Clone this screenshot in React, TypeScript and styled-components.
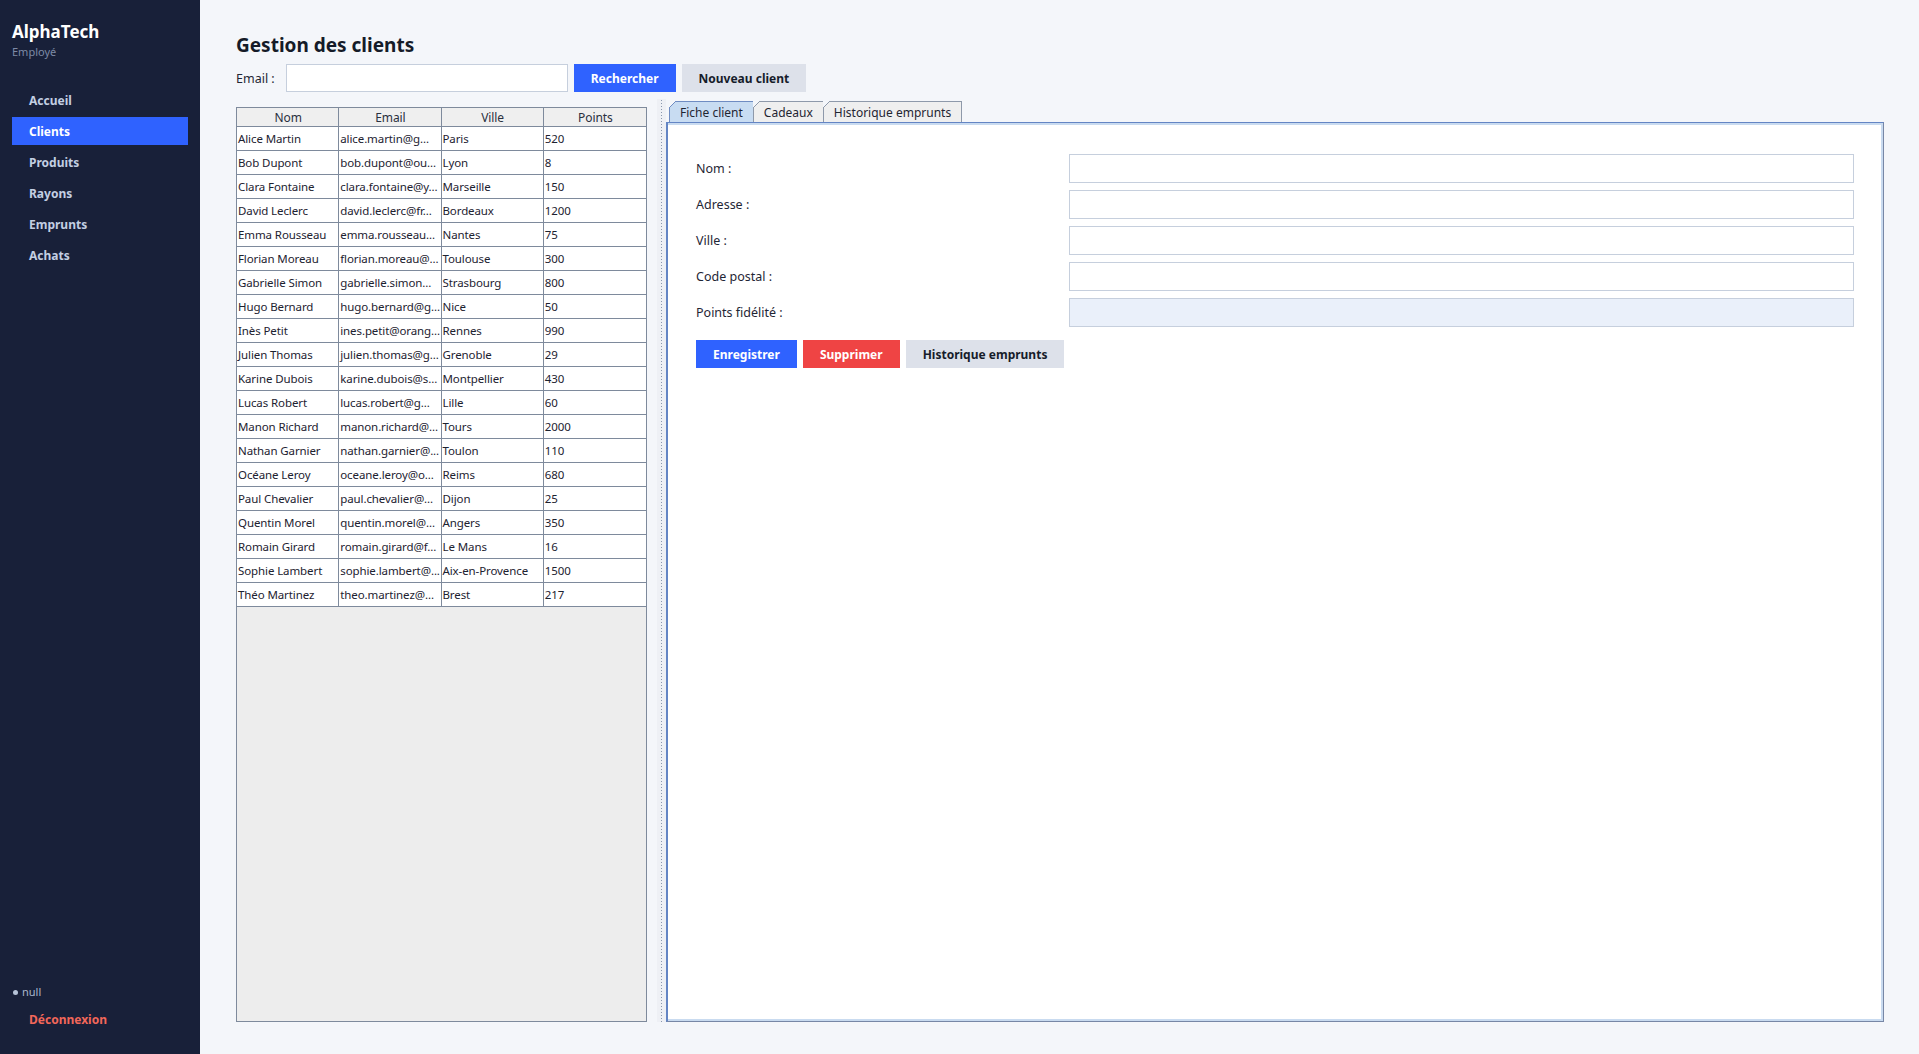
import * as React from 'react';
import styled, { createGlobalStyle } from 'styled-components';

const GlobalStyle = createGlobalStyle`
  html, body {
    margin: 0;
    padding: 0;
    height: 100%;
    overflow: hidden;
  }
  body {
    font-family: "Noto Sans", "Open Sans", "Liberation Sans", sans-serif;
    color: #1b2333;
    background: #f4f6fa;
  }
  * {
    box-sizing: border-box;
  }
`;

const Layout = styled.div`
  display: flex;
  width: 100vw;
  height: 100vh;
`;

/* ---------- sidebar ---------- */

const Sidebar = styled.aside`
  width: 200px;
  flex-shrink: 0;
  background: #182039;
  display: flex;
  flex-direction: column;
  padding: 22px 12px 21px 12px;
`;

const Brand = styled.div`
  font-size: 17px;
  line-height: 20px;
  font-weight: 700;
  color: #ffffff;
`;

const Role = styled.div`
  margin-top: 3px;
  font-size: 11px;
  line-height: 13px;
  color: #7d8aa6;
`;

const Nav = styled.nav`
  margin-top: 28px;
  display: flex;
  flex-direction: column;
  gap: 3px;
`;

const NavItem = styled.div<{ $active?: boolean; $danger?: boolean }>`
  height: 28px;
  display: flex;
  align-items: center;
  padding-left: 17px;
  font-size: 12px;
  font-weight: 700;
  background: ${p => (p.$active ? '#2f62ff' : 'transparent')};
  color: ${p => (p.$danger ? '#f2675a' : p.$active ? '#ffffff' : '#c3cfe3')};
  cursor: pointer;
`;

const Footer = styled.div`
  margin-top: auto;
  display: flex;
  flex-direction: column;
  gap: 6px;
`;

const UserLine = styled.div`
  display: flex;
  align-items: center;
  gap: 4px;
  padding-left: 1px;
  font-size: 11px;
  line-height: 14px;
  color: #aab7cd;
`;

const Dot = styled.span`
  width: 5px;
  height: 5px;
  border-radius: 50%;
  background: #b6c3d8;
`;

/* ---------- main ---------- */

const Main = styled.main`
  flex: 1;
  min-width: 0;
  display: flex;
  flex-direction: column;
  padding: 33px 35px 32px 36px;
`;

const Title = styled.h1`
  margin: 0;
  font-size: 19px;
  line-height: 24px;
  font-weight: 700;
  color: #151b28;
`;

const SearchRow = styled.div`
  margin-top: 7px;
  display: flex;
  align-items: center;
  height: 28px;
  gap: 6px;
`;

const FieldLabel = styled.label`
  font-size: 12.5px;
  color: #1f2635;
  white-space: nowrap;
`;

const TextInput = styled.input<{ $readOnly?: boolean }>`
  height: 29px;
  border: 1px solid #c6cfdd;
  background: ${p => (p.$readOnly ? '#eaf0fa' : '#ffffff')};
  font: inherit;
  font-size: 12.5px;
  padding: 0 6px;
  outline: none;
`;

const SearchInput = styled(TextInput)`
  width: 282px;
  height: 28px;
  margin-left: 5px;
`;

const Button = styled.button<{ $variant: 'primary' | 'danger' | 'neutral' }>`
  height: 28px;
  border: none;
  padding: 0 17px;
  font-family: inherit;
  font-size: 12px;
  font-weight: 700;
  cursor: pointer;
  background: ${p =>
    p.$variant === 'primary' ? '#2f62ff' : p.$variant === 'danger' ? '#ef4444' : '#dde1ea'};
  color: ${p => (p.$variant === 'neutral' ? '#161c2a' : '#ffffff')};
`;

const Split = styled.div`
  margin-top: 7px;
  flex: 1;
  min-height: 0;
  display: flex;
`;

const LeftPane = styled.div`
  width: 411px;
  flex-shrink: 0;
  padding-top: 8px;
  display: flex;
  flex-direction: column;
`;

const Divider = styled.div`
  width: 9px;
  margin-left: 10px;
  flex-shrink: 0;
  background-color: #eef0f5;
  background-image: linear-gradient(#8a97ad 1px, transparent 1px);
  background-size: 1px 3px;
  background-position: 4px 1px;
  background-repeat: repeat-y;
`;

/* ---------- table ---------- */

const TableBox = styled.div`
  flex: 1;
  border: 1px solid #7e8a9c;
  background: #ededed;
  display: flex;
  flex-direction: column;
  font-size: 11.5px;
  letter-spacing: -0.1px;
`;

const Row = styled.div<{ $head?: boolean }>`
  display: grid;
  grid-template-columns: repeat(4, 1fr);
  height: ${p => (p.$head ? '19px' : '24px')};
  background: ${p => (p.$head ? '#efefef' : '#ffffff')};
  border-bottom: 1px solid #7e8a9c;
`;

const Cell = styled.div<{ $head?: boolean }>`
  display: flex;
  align-items: center;
  justify-content: ${p => (p.$head ? 'center' : 'flex-start')};
  padding: 0 0 0 1px;
  border-right: 1px solid #7e8a9c;
  white-space: nowrap;
  overflow: hidden;
  font-size: ${p => (p.$head ? '12px' : 'inherit')};
  color: ${p => (p.$head ? '#2a3040' : '#1d2230')};
  &:last-child {
    border-right: none;
  }
`;

/* ---------- tabs + form ---------- */

const RightPane = styled.div`
  flex: 1;
  min-width: 0;
  display: flex;
  flex-direction: column;
`;

const TabBar = styled.div`
  height: 23px;
  display: flex;
  align-items: flex-end;
  padding-left: 3px;
`;

const Tab = styled.div<{ $active?: boolean }>`
  position: relative;
  height: 21px;
  padding: 0 10px;
  display: flex;
  align-items: center;
  font-size: 12px;
  color: #1f2532;
  background: ${p => (p.$active ? '#c8dcf2' : '#efefef')};
  border: 1px solid ${p => (p.$active ? '#6f8cc2' : '#8e99aa')};
  border-bottom: none;
  margin-left: ${p => (p.$active ? '0' : '-1px')};
  &::before {
    content: '';
    position: absolute;
    top: -1px;
    left: -1px;
    width: 7px;
    height: 7px;
    background: linear-gradient(
      135deg,
      #f4f6fa 0 calc(50% - 0.6px),
      ${p => (p.$active ? '#6f8cc2' : '#8e99aa')} calc(50% - 0.6px) calc(50% + 0.6px),
      transparent calc(50% + 0.6px)
    );
  }
`;

const Panel = styled.div`
  flex: 1;
  background: #ffffff;
  border: 1px solid #7787a6;
  border-left: 2px solid #6485c4;
  border-top-color: #6485c4;
  box-shadow: inset 0 2px 0 #c9dbf0, inset -2px -2px 0 #c9dbf0;
  padding: 31px 29px 0 28px;
`;

const FormGrid = styled.div`
  display: grid;
  grid-template-columns: 373px 1fr;
  grid-auto-rows: 29px;
  row-gap: 7px;
  align-items: center;
`;

const FormLabel = styled.label`
  font-size: 12.5px;
  color: #1f2635;
`;

const Actions = styled.div`
  margin-top: 13px;
  display: flex;
  gap: 6px;
`;

type Client = { nom: string; email: string; ville: string; points: number };

const clients: Client[] = [
  { nom: 'Alice Martin', email: 'alice.martin@g...', ville: 'Paris', points: 520 },
  { nom: 'Bob Dupont', email: 'bob.dupont@ou...', ville: 'Lyon', points: 8 },
  { nom: 'Clara Fontaine', email: 'clara.fontaine@y...', ville: 'Marseille', points: 150 },
  { nom: 'David Leclerc', email: 'david.leclerc@fr...', ville: 'Bordeaux', points: 1200 },
  { nom: 'Emma Rousseau', email: 'emma.rousseau...', ville: 'Nantes', points: 75 },
  { nom: 'Florian Moreau', email: 'florian.moreau@...', ville: 'Toulouse', points: 300 },
  { nom: 'Gabrielle Simon', email: 'gabrielle.simon...', ville: 'Strasbourg', points: 800 },
  { nom: 'Hugo Bernard', email: 'hugo.bernard@g...', ville: 'Nice', points: 50 },
  { nom: 'Inès Petit', email: 'ines.petit@orang...', ville: 'Rennes', points: 990 },
  { nom: 'Julien Thomas', email: 'julien.thomas@g...', ville: 'Grenoble', points: 29 },
  { nom: 'Karine Dubois', email: 'karine.dubois@s...', ville: 'Montpellier', points: 430 },
  { nom: 'Lucas Robert', email: 'lucas.robert@g...', ville: 'Lille', points: 60 },
  { nom: 'Manon Richard', email: 'manon.richard@...', ville: 'Tours', points: 2000 },
  { nom: 'Nathan Garnier', email: 'nathan.garnier@...', ville: 'Toulon', points: 110 },
  { nom: 'Océane Leroy', email: 'oceane.leroy@o...', ville: 'Reims', points: 680 },
  { nom: 'Paul Chevalier', email: 'paul.chevalier@...', ville: 'Dijon', points: 25 },
  { nom: 'Quentin Morel', email: 'quentin.morel@...', ville: 'Angers', points: 350 },
  { nom: 'Romain Girard', email: 'romain.girard@f...', ville: 'Le Mans', points: 16 },
  { nom: 'Sophie Lambert', email: 'sophie.lambert@...', ville: 'Aix-en-Provence', points: 1500 },
  { nom: 'Théo Martinez', email: 'theo.martinez@...', ville: 'Brest', points: 217 },
];

const navItems = ['Accueil', 'Clients', 'Produits', 'Rayons', 'Emprunts', 'Achats'];

const fields = [
  { label: 'Nom :' },
  { label: 'Adresse :' },
  { label: 'Ville :' },
  { label: 'Code postal :' },
  { label: 'Points fidélité :', readOnly: true },
];

export default function App() {
  const [ active, setActive ] = React.useState('Clients');
  const [ tab, setTab ] = React.useState('Fiche client');
  const [ email, setEmail ] = React.useState('');

  return (
    <Layout>
      <GlobalStyle />
      <Sidebar>
        <Brand>AlphaTech</Brand>
        <Role>Employé</Role>
        <Nav>
          {navItems.map(item => (
            <NavItem key={item} $active={item === active} onClick={() => setActive(item)}>
              {item}
            </NavItem>
          ))}
        </Nav>
        <Footer>
          <UserLine><Dot />null</UserLine>
          <NavItem $danger>Déconnexion</NavItem>
        </Footer>
      </Sidebar>

      <Main>
        <Title>Gestion des clients</Title>
        <SearchRow>
          <FieldLabel>Email :</FieldLabel>
          <SearchInput value={email} onChange={e => setEmail(e.target.value)} />
          <Button $variant='primary'>Rechercher</Button>
          <Button $variant='neutral'>Nouveau client</Button>
        </SearchRow>

        <Split>
          <LeftPane>
            <TableBox>
              <Row $head>
                {['Nom', 'Email', 'Ville', 'Points'].map(h => (
                  <Cell key={h} $head>{h}</Cell>
                ))}
              </Row>
              {clients.map(c => (
                <Row key={c.nom}>
                  <Cell>{c.nom}</Cell>
                  <Cell>{c.email}</Cell>
                  <Cell>{c.ville}</Cell>
                  <Cell>{c.points}</Cell>
                </Row>
              ))}
            </TableBox>
          </LeftPane>

          <Divider />

          <RightPane>
            <TabBar>
              {['Fiche client', 'Cadeaux', 'Historique emprunts'].map(t => (
                <Tab key={t} $active={t === tab} onClick={() => setTab(t)}>{t}</Tab>
              ))}
            </TabBar>
            <Panel>
              <FormGrid>
                {fields.map(f => (
                  <React.Fragment key={f.label}>
                    <FormLabel>{f.label}</FormLabel>
                    <TextInput $readOnly={f.readOnly} readOnly={f.readOnly} />
                  </React.Fragment>
                ))}
              </FormGrid>
              <Actions>
                <Button $variant='primary'>Enregistrer</Button>
                <Button $variant='danger'>Supprimer</Button>
                <Button $variant='neutral'>Historique emprunts</Button>
              </Actions>
            </Panel>
          </RightPane>
        </Split>
      </Main>
    </Layout>
  );
}
